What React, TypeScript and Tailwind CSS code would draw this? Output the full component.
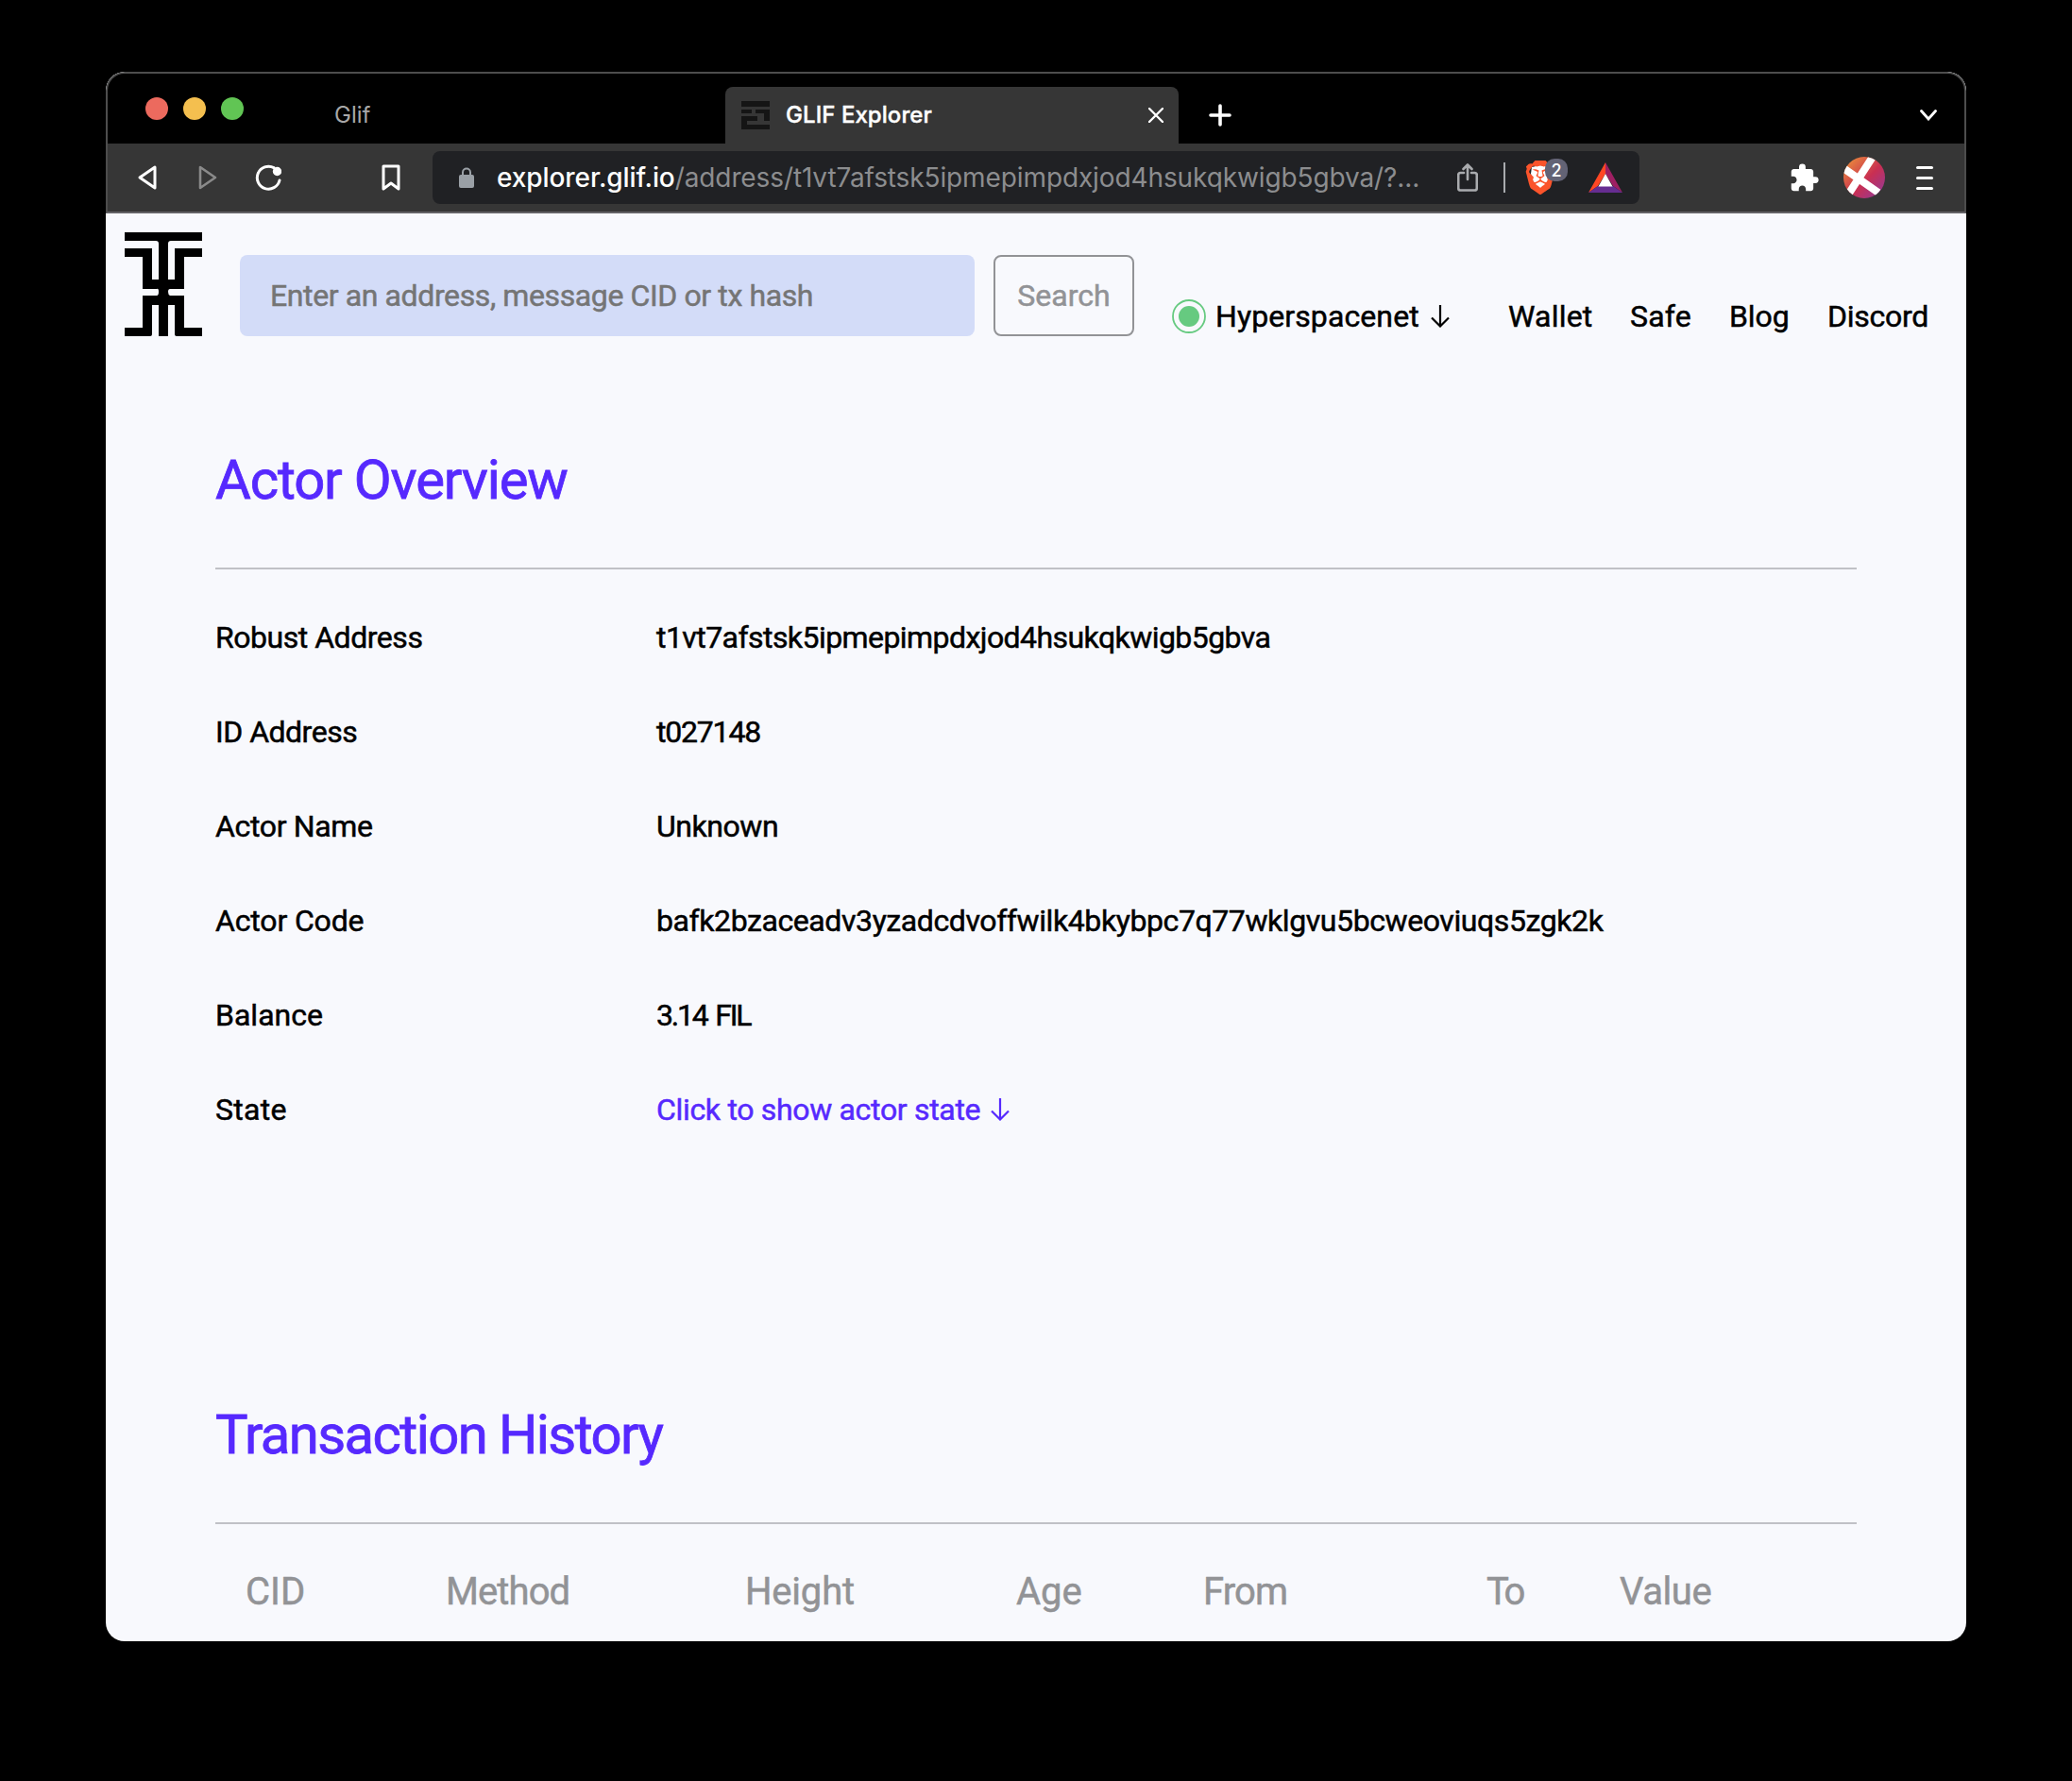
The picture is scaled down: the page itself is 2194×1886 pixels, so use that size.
import React from "react";
import { MdExtension } from "react-icons/md";
import { SiBrave } from "react-icons/si";

const rows: [string, string, string, string][] = [
  ["Robust Address", "tracking-[-0.47px]", "t1vt7afstsk5ipmepimpdxjod4hsukqkwigb5gbva", "tracking-[-0.56px]"],
  ["ID Address", "tracking-[-0.5px]", "t027148", "tracking-[-1.2px]"],
  ["Actor Name", "tracking-[-0.35px]", "Unknown", "tracking-[-0.45px]"],
  ["Actor Code", "tracking-[-0.15px]", "bafk2bzaceadv3yzadcdvoffwilk4bkybpc7q77wklgvu5bcweoviuqs5zgk2k", "tracking-[-0.41px]"],
  ["Balance", "tracking-[0px]", "3.14 FIL", "tracking-[-2.2px] [word-spacing:3px]"],
];

const columns: [string, string][] = [
  ["CID", "w-[212px]"],
  ["Method", "w-[317px] tracking-[-0.9px]"],
  ["Height", "w-[287px] tracking-[-0.2px]"],
  ["Age", "w-[198px]"],
  ["From", "w-[300px] tracking-[-0.9px]"],
  ["To", "w-[141px] tracking-[-3.4px]"],
  ["Value", "w-[120px] tracking-[-0.4px]"],
];

function ArrowDown({ className }: { className: string }) {
  return (
    <svg viewBox="0 0 20 24" className={className} fill="none" stroke="currentColor" strokeWidth="2.2">
      <path d="M10 0V22.5M1 13.5L10 22.5L19 13.5" />
    </svg>
  );
}

function Logo() {
  return (
    <svg viewBox="0 0 82 110" className="h-[110px] w-[82px] shrink-0" fill="#000">
      <path d="M0 0H82V9H49Q46 9 46 12V50H53V17H82V26H63V60H48Q46 60 46 63T48 67H63V101H82V110H55Q53 110 53 108V77H46V110H36V77H29V108Q29 110 27 110H0V101H19V67H34Q36 67 36 63T34 60H19V26H0V17H29V50H36V12Q36 9 33 9H0Z" />
    </svg>
  );
}

export default function App() {
  return (
    <div className="h-[1886px] w-[2194px] overflow-hidden bg-black pl-[112px] pt-[76px] font-['Roboto',sans-serif]">
      <div className="flex h-[1662px] w-[1970px] flex-col overflow-hidden rounded-[20px] bg-[#f8f9fd]">
        <div className="flex h-[76px] shrink-0 rounded-t-[20px] border-2 border-b-0 border-[#4d4d4d] bg-black font-['Inter',sans-serif]">
          <div className="ml-[40px] mt-[25px] flex h-6 gap-4">
            <span className="size-6 rounded-full bg-[#ec6a5e]" />
            <span className="size-6 rounded-full bg-[#f4bf4f]" />
            <span className="size-6 rounded-full bg-[#61c554]" />
          </div>
          <div className="ml-[96px] mt-[26px] w-[414px] text-[24px] leading-[36px] text-[#a8a8a8]">Glif</div>
          <div className="mt-[14px] flex h-[60px] w-[480px] rounded-t-[8px] bg-[#363636] pl-[17px]">
            <svg viewBox="0 0 30 30" className="mt-[15px] size-[30px]" fill="#151515">
              <path d="M0 0H30V6H0ZM0 9H11V13H0ZM15 9H30V21H24V13H15ZM0 16H17V21H6V25H30V30H0Z" />
            </svg>
            <div className="ml-[17px] mt-[12px] w-[384px] text-[24px] font-medium leading-[36px] text-white tracking-[0.06px] [-webkit-text-stroke:0.4px]">GLIF Explorer</div>
            <svg viewBox="0 0 16 16" className="mt-[22px] size-4" stroke="#fff" strokeWidth="2.4" strokeLinecap="round">
              <path d="M1 1L15 15M15 1L1 15" />
            </svg>
          </div>
          <svg viewBox="0 0 24 24" className="ml-[32px] mt-[32px] size-6" stroke="#fff" strokeWidth="3.6" strokeLinecap="round">
            <path d="M12 2V22M2 12H22" />
          </svg>
          <svg viewBox="0 0 18 12" className="ml-auto mr-[29px] mt-[38px] h-[12px] w-[18px]" fill="none" stroke="#fff" strokeWidth="2.8" strokeLinecap="round">
            <path d="M1.5 1.5L9 10L16.5 1.5" />
          </svg>
        </div>
        <div className="flex h-[74px] shrink-0 items-center border-x-2 border-b-2 border-b-[#636266] border-x-[#4d4d4d] bg-[#363636] font-['Inter',sans-serif]">
          <svg viewBox="0 0 20 26" className="ml-[32px] h-[26px] w-[20px]" fill="none" stroke="#fff" strokeWidth="3" strokeLinejoin="round">
            <path d="M18 2V24L2 13Z" />
          </svg>
          <svg viewBox="0 0 20 26" className="ml-[44px] h-[26px] w-[20px]" fill="none" stroke="#8a8a8a" strokeWidth="2.6" strokeLinejoin="round">
            <path d="M2 2V24L18 13Z" />
          </svg>
          <svg viewBox="0 0 28 28" className="ml-[40px] size-7" fill="none" stroke="#fff" strokeWidth="3" strokeLinecap="round">
            <path d="M20 3.600A12 12 0 1 0 26 17" />
            <circle cx="23.5" cy="7.5" r="3.2" fill="#fff" />
          </svg>
          <svg viewBox="0 0 20 28" className="ml-[106px] h-7 w-5" fill="none" stroke="#fff" strokeWidth="3" strokeLinejoin="round">
            <path d="M2 2H18V26L10 20L2 26Z" />
          </svg>
          <div className="ml-[34px] flex h-14 w-[1278px] items-center rounded-[8px] bg-[#202124]">
            <svg viewBox="0 0 16 22" className="ml-[28px] h-[22px] w-4">
              <rect y="8" width="16" height="14" rx="2" fill="#9aa0a6" />
              <path d="M4 9V5.5a4 4 0 0 1 8 0V9" fill="none" stroke="#9aa0a6" strokeWidth="2" />
            </svg>
            <div className="ml-[24px] w-[1017px] whitespace-nowrap text-[28px] leading-[40px] tracking-[-0.11px] text-[#8c8d8f]">
              <span className="font-[450] text-white tracking-[-0.08px]">explorer.glif.io</span>/address/t1vt7afstsk5ipmepimpdxjod4hsukqkwigb5gbva/?...
            </div>
            <svg viewBox="0 0 22 30" className="h-[30px] w-[22px]" fill="none" stroke="#a9abae" strokeWidth="2.6" strokeLinecap="round" strokeLinejoin="round">
              <path d="M7 10H3.5Q1.2 10 1.2 12.3V26Q1.2 28.5 3.5 28.5H18.5Q20.8 28.5 20.8 26V12.3Q20.8 10 18.5 10H15M11 17V1.5M6.5 6L11 1.5L15.5 6" />
            </svg>
            <div className="ml-[27px] h-8 w-[2px] bg-[#a9abae]" />
            <div className="relative ml-[22px] h-9 w-[44px]">
              <svg viewBox="0 0 30 36" className="absolute left-0 top-0 h-9 w-[30px]">
                <path d="M6 7L15 5L24 7L25 14L21 27L15 31L9 27L5 14Z" fill="#fff" />
              </svg>
              <SiBrave className="absolute left-[-3px] top-0 size-9 text-[#fb542b]" />
              <span className="absolute left-[20px] top-[-2px] flex h-6 w-6 items-center justify-center rounded-[10px] bg-[#636375] text-[18px] font-medium text-white">2</span>
            </div>
            <svg viewBox="0 0 36 32" className="ml-[22px] h-8 w-9">
              <path d="M18 0L0 32L10 25L18 12Z" fill="#ff4724" />
              <path d="M18 0L36 32L26 25L18 12Z" fill="#9e1f63" />
              <path d="M0 32H36L26 25H10Z" fill="#662d91" />
              <path d="M18 12L25.500 25.500H10.500Z" fill="#fff" />
            </svg>
          </div>
          <MdExtension className="ml-[158px] size-[33px] text-white" />
          <svg viewBox="0 0 44 44" className="ml-[25px] size-11">
            <defs>
              <linearGradient id="av" x1="0" y1="0" x2="1" y2="1">
                <stop offset="0.1" stopColor="#e9873c" />
                <stop offset="0.55" stopColor="#c92f52" />
                <stop offset="1" stopColor="#8c3ba0" />
              </linearGradient>
              <clipPath id="avc"><circle cx="22" cy="22" r="22" /></clipPath>
            </defs>
            <circle cx="22" cy="22" r="22" fill="url(#av)" />
            <path d="M0 12L37 38M31 0L5 40" stroke="#fff" strokeWidth="8" clipPath="url(#avc)" />
          </svg>
          <div className="ml-[33px] flex flex-col gap-[8px]">
            <span className="h-[3px] w-[18px] rounded-full bg-white" />
            <span className="h-[3px] w-[18px] rounded-full bg-white" />
            <span className="h-[3px] w-[18px] rounded-full bg-white" />
          </div>
        </div>

        <header className="flex h-[150px] shrink-0 pl-[20px] pt-[20px] [-webkit-text-stroke:0.5px]">
          <Logo />
          <div className="ml-[40px] mt-[24px] flex h-[86px] w-[778px] items-center rounded-[8px] bg-[#d3dcf8] pl-[32px] text-[32px] tracking-[-0.39px] text-[#757575]">
            <span>Enter an address, message CID or tx hash</span>
          </div>
          <button className="ml-[20px] mt-[24px] h-[86px] w-[149px] rounded-[8px] border-2 border-[#929396] text-[32px] text-[#929396]">Search</button>
          <nav className="ml-[40px] mt-[69px] flex h-[40px] items-center whitespace-nowrap text-[32px] text-black">
            <svg viewBox="0 0 36 36" className="size-9">
              <circle cx="18" cy="18" r="17" fill="none" stroke="#66ca80" strokeWidth="1.800" />
              <circle cx="18" cy="18" r="11" fill="#66ca80" />
            </svg>
            <span className="ml-[10px] w-[228px] tracking-[0.1px]">Hyperspacenet</span>
            <ArrowDown className="h-6 w-5" />
            <span className="ml-[62px] w-[129px] tracking-[0.2px]">Wallet</span>
            <span className="w-[105px] tracking-[0.2px]">Safe</span>
            <span className="w-[104px] tracking-[-0.1px]">Blog</span>
            <span className="tracking-[-0.25px]">Discord</span>
          </nav>
        </header>

        <main className="flex flex-col px-[116px] text-[32px] text-black [-webkit-text-stroke:0.5px]">
          <h1 className="mt-[96px] h-[72px] text-[58px] leading-[72px] tracking-[-1.15px] text-[#5629fe] [-webkit-text-stroke:0.8px]">Actor Overview</h1>
          <div className="mt-[57px] h-[2px] bg-[#c0c1c6]" />
          <div className="mt-[22px] flex flex-col">
            {rows.map(([label, labelTracking, value, valueTracking]) => (
              <div key={label} className="flex h-[100px] items-center">
                <span className={"w-[467px] " + labelTracking}>{label}</span>
                <span className={valueTracking}>{value}</span>
              </div>
            ))}
            <div className="flex h-[100px] items-center">
              <span className="w-[467px] tracking-[0.3px]">State</span>
              <span className="w-[354px] tracking-[-0.32px] text-[#5629fe]">Click to show actor state</span>
              <ArrowDown className="h-6 w-5 text-[#5629fe]" />
            </div>
          </div>
          <h1 className="mt-[258px] h-[72px] text-[58px] leading-[72px] tracking-[-1.58px] text-[#5629fe] [-webkit-text-stroke:0.8px]">Transaction History</h1>
          <div className="mt-[57px] h-[2px] bg-[#c0c1c6]" />
          <div className="mt-[48px] flex pl-[32px] text-[40px] leading-[48px] text-[#929396]">
            {columns.map(([name, w]) => (
              <span key={name} className={w + " shrink-0"}>{name}</span>
            ))}
          </div>
        </main>
      </div>
    </div>
  );
}
